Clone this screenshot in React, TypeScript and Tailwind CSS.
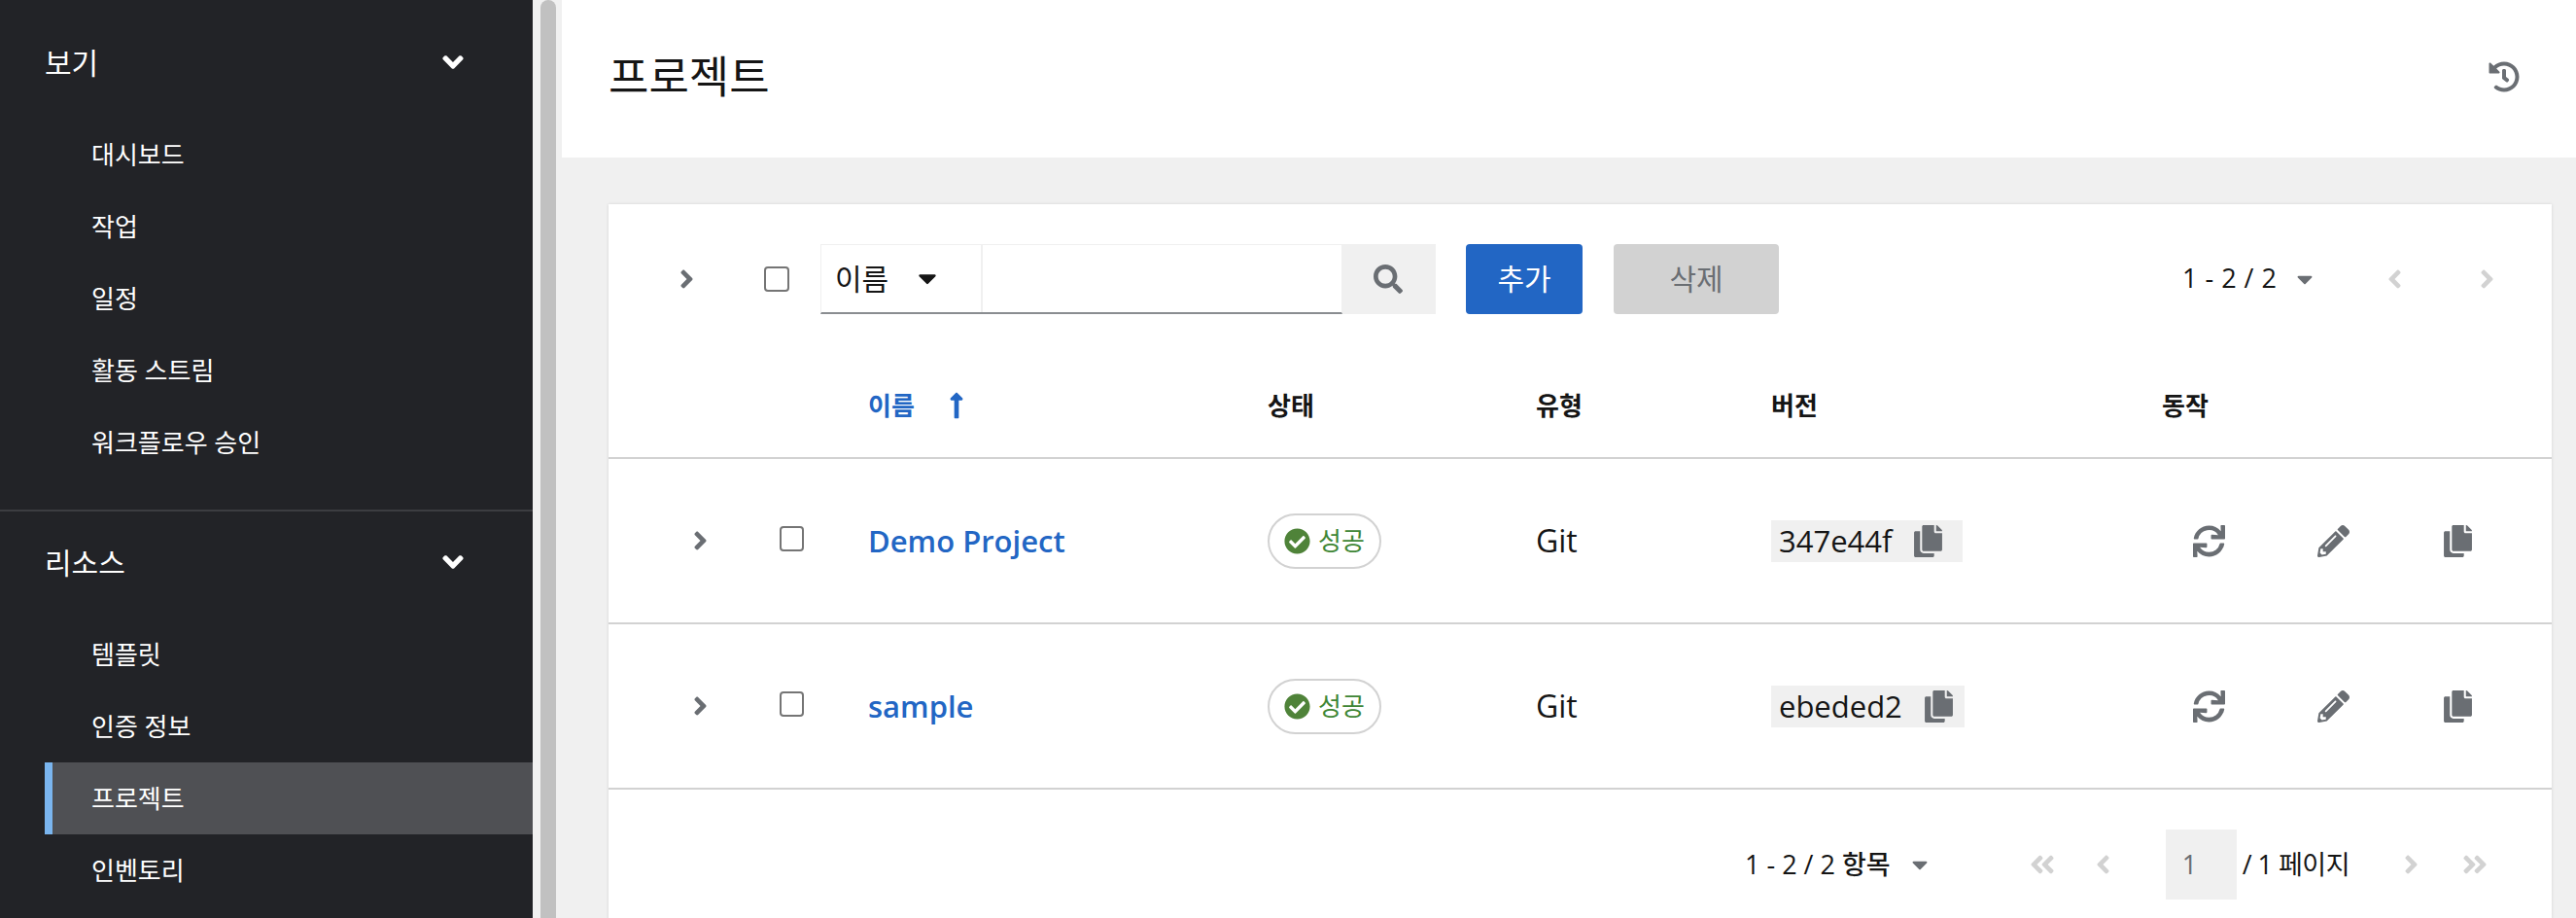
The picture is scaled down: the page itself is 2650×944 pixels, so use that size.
import {
  FaAngleDoubleLeft,
  FaAngleDoubleRight,
  FaAngleDown,
  FaAngleLeft,
  FaAngleRight,
  FaCaretDown,
  FaCheckCircle,
  FaCopy,
  FaHistory,
  FaLongArrowAltUp,
  FaPencilAlt,
  FaSearch,
  FaSync,
} from "react-icons/fa";

const fontStack = "font-['Open_Sans','Noto_Sans_CJK_KR',sans-serif]";

function NavGroup({ title, items, active }: { title: string; items: string[]; active?: string }) {
  return (
    <div>
      <div className="flex h-[52px] items-center justify-between pl-[46px] pr-[69px] text-[30px] text-white">
        <span>{title}</span>
        <FaAngleDown className="h-[34px] w-[26px]" />
      </div>
      <ul className="mt-[32px]">
        {items.map((item) => (
          <li
            key={item}
            className={
              item === active
                ? "ml-[46px] flex h-[74px] items-center border-l-8 border-[#7ab5ef] bg-[#4f5054] pl-[40px] text-[26px] text-white"
                : "ml-[46px] flex h-[74px] items-center border-l-8 border-transparent pl-[40px] text-[26px] text-white"
            }
          >
            {item}
          </li>
        ))}
      </ul>
    </div>
  );
}

function Row({ name, version, versionWidth }: { name: string; version: string; versionWidth: string }) {
  return (
    <div className="grid h-[170px] grid-cols-[267px_411px_276px_242px_402px_1fr] items-center border-b-2 border-[#d2d2d2] text-[32px] text-[#151515]">
      <div className="flex items-center">
        <FaAngleRight className="ml-[85px] h-[30px] w-[19px] text-[#6a6e73]" />
        <span className="ml-[72px] mb-[4px] h-[26px] w-[25px] rounded-[4px] border-2 border-[#757575] bg-white" />
      </div>
      <div className="text-[31px] font-semibold text-[#2266c4]">{name}</div>
      <div>
        <span className="flex h-[57px] w-[117px] items-center gap-[8px] rounded-full border-2 border-[#d2d2d2] pl-[15px] text-[26px] text-[#3e8635]">
          <FaCheckCircle className="h-[27px] w-[27px] text-[#4f8339]" />
          성공
        </span>
      </div>
      <div>Git</div>
      <div className="flex items-center">
        <span className={`flex h-[43px] items-center bg-[#f0f0f0] pl-[8px] ${versionWidth}`}>
          <span className="text-[31px]">{version}</span>
          <FaCopy className="ml-[23px] h-[33px] w-[29px] text-[#6a6e73]" />
        </span>
      </div>
      <div className="flex items-center text-[#6a6e73]">
        <span className="flex w-[96px] justify-center">
          <FaSync className="h-[33px] w-[33px]" />
        </span>
        <span className="ml-[32px] flex w-[96px] justify-center">
          <FaPencilAlt className="h-[33px] w-[33px]" />
        </span>
        <span className="ml-[32px] flex w-[96px] justify-center">
          <FaCopy className="h-[33px] w-[29px]" />
        </span>
      </div>
    </div>
  );
}

export default function App() {
  return (
    <div className={`flex h-screen overflow-hidden bg-[#f0f0f0] ${fontStack}`}>
      {/* Sidebar */}
      <aside className="w-[548px] shrink-0 bg-[#222327] pt-[38px]">
        <NavGroup title="보기" items={["대시보드", "작업", "일정", "활동 스트림", "워크플로우 승인"]} />
        <div className="mt-[32px] mb-[26px] h-[2px] bg-[#3c3d41]" />
        <NavGroup title="리소스" items={["템플릿", "인증 정보", "프로젝트", "인벤토리"]} active="프로젝트" />
      </aside>

      {/* Scrollbar */}
      <div className="w-[28px] shrink-0 bg-[#f1f1f1] pl-[8px]">
        <div className="h-full w-[16px] rounded-t-full bg-[#c1c1c1]" />
      </div>

      <main className="min-w-0 flex-1 pl-[2px]">
        <header className="flex h-[162px] items-center justify-between bg-white pb-[4px] pl-[48px] pr-[58px]">
          <h1 className="text-[45px] font-normal text-[#151515]">프로젝트</h1>
          <FaHistory className="h-[32px] w-[32px] text-[#6a6e73]" />
        </header>

        <div className="ml-[48px] mr-[25px] mt-[48px] bg-white shadow-[0_0_3px_rgba(0,0,0,0.12)]">
          {/* Toolbar */}
          <div className="flex h-[154px] items-center pb-[1px]">
            <FaAngleRight className="ml-[71px] h-[30px] w-[19px] text-[#6a6e73]" />
            <span className="ml-[70px] h-[26px] w-[26px] rounded-[4px] border-2 border-[#757575] bg-white" />
            <div className="ml-[32px] flex h-[72px] w-[537px] border border-[#f0f0f0] border-b-2 border-b-[#8a8d90]">
              <div className="flex w-[166px] items-center border-r-2 border-[#f0f0f0] pl-[14px] text-[30px] text-[#151515]">
                이름
                <FaCaretDown className="ml-[30px] h-[30px] w-[20px]" />
              </div>
            </div>
            <div className="flex h-[72px] w-[96px] items-center justify-center bg-[#f0f0f0]">
              <FaSearch className="mr-[2px] h-[30px] w-[30px] text-[#6a6e73]" />
            </div>
            <button className="ml-[31px] h-[72px] w-[120px] rounded-[4px] bg-[#2266c4] text-[30px] text-white">추가</button>
            <button className="ml-[32px] h-[72px] w-[170px] rounded-[4px] bg-[#d2d2d2] text-[30px] text-[#6a6e73]">삭제</button>
            <div className="ml-[415px] flex items-center text-[27px] font-medium tracking-[0.5px] text-[#151515]">
              1 - 2 / 2
              <FaCaretDown className="ml-[21px] h-[28px] w-[16px] text-[#6a6e73]" />
            </div>
            <FaAngleLeft className="ml-[75px] h-[30px] w-[19px] text-[#d2d2d2]" />
            <FaAngleRight className="ml-[76px] h-[30px] w-[19px] text-[#d2d2d2]" />
          </div>

          {/* Table header */}
          <div className="grid h-[108px] grid-cols-[267px_411px_276px_242px_402px_1fr] items-center border-b-2 border-[#d2d2d2] text-[26px] font-semibold text-[#151515]">
            <div />
            <div className="flex items-center text-[#2266c4]">
              이름
              <FaLongArrowAltUp className="ml-[33px] h-[30px] w-[20px]" />
            </div>
            <div>상태</div>
            <div>유형</div>
            <div>버전</div>
            <div>동작</div>
          </div>

          <Row name="Demo Project" version="347e44f" versionWidth="w-[197px]" />
          <Row name="sample" version="ebeded2" versionWidth="w-[199px]" />

          {/* Footer pagination */}
          <div className="flex items-center pb-[41px] pt-[41px] text-[27px] text-[#151515]">
            <div className="ml-[1169px] flex items-center font-medium">
              1 - 2 / 2 항목
              <FaCaretDown className="ml-[22px] h-[28px] w-[16px] text-[#6a6e73]" />
            </div>
            <FaAngleDoubleLeft className="ml-[105px] h-[30px] w-[26px] text-[#d2d2d2]" />
            <FaAngleLeft className="ml-[40px] h-[30px] w-[19px] text-[#d2d2d2]" />
            <div className="ml-[55px] flex h-[72px] w-[73px] items-center bg-[#f0f0f0] pl-[17px] text-[#6a6e73]">1</div>
            <span className="ml-[6px] whitespace-nowrap tracking-[-0.5px]">/ 1 페이지</span>
            <FaAngleRight className="ml-[54px] h-[30px] w-[19px] text-[#d2d2d2]" />
            <FaAngleDoubleRight className="ml-[43px] h-[30px] w-[26px] text-[#d2d2d2]" />
          </div>
        </div>
      </main>
    </div>
  );
}
